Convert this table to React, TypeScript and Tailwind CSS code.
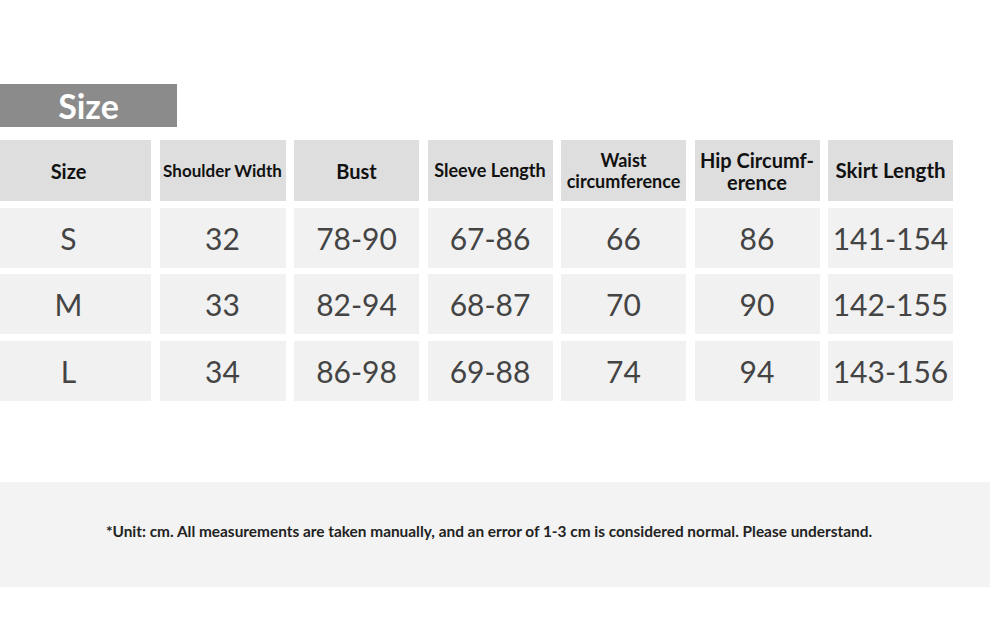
const HEADERS: { label: string; cls: string }[] = [
  { label: "Size", cls: "text-[20px]" },
  { label: "Shoulder Width", cls: "text-[17px]" },
  { label: "Bust", cls: "text-[20px]" },
  { label: "Sleeve Length", cls: "text-[18px]" },
  { label: "Waist circumference", cls: "text-[18px] leading-[21px]" },
  { label: "Hip Circumf- erence", cls: "text-[20px] leading-[22px]" },
  { label: "Skirt Length", cls: "text-[20.5px]" },
];

const ROWS = [
  ["S", "32", "78-90", "67-86", "66", "86", "141-154"],
  ["M", "33", "82-94", "68-87", "70", "90", "142-155"],
  ["L", "34", "86-98", "69-88", "74", "94", "143-156"],
];

export default function App() {
  return (
    <div
      className="w-[990px] h-[621px] bg-white overflow-hidden pt-[84px]"
      style={{ fontFamily: "Lato, 'Noto Sans', sans-serif" }}
    >
      <div className="w-[177px] h-[43px] bg-[#8b8b8b] flex items-center justify-center">
        <span className="text-white font-bold text-[34px] leading-none">Size</span>
      </div>

      <div className="mt-[13px] ml-[-14px] grid grid-cols-[165px_126px_125px_125px_125px_125px_125px] gap-x-[8.5px] gap-y-[6.5px] grid-rows-[61px_60px_60px_60px]">
        {HEADERS.map((h) => (
          <div
            key={h.label}
            className={`bg-[#dedede] flex items-center justify-center text-center font-bold text-[#111] whitespace-pre-line ${h.cls}`}
          >
            {h.label}
          </div>
        ))}
        {ROWS.flat().map((v, i) => (
          <div
            key={i}
            className="bg-[#f1f1f1] flex items-center justify-center text-[30px] text-[#444] leading-none"
          >
            {v}
          </div>
        ))}
      </div>

      <div className="mt-[81px] h-[105px] bg-[#f3f3f3] flex items-center justify-center">
        <span className="font-bold text-[15.4px] text-[#222] ml-[-12px] mt-[-4px]">
          *Unit: cm. All measurements are taken manually, and an error of 1-3 cm is considered normal. Please understand.
        </span>
      </div>
    </div>
  );
}
